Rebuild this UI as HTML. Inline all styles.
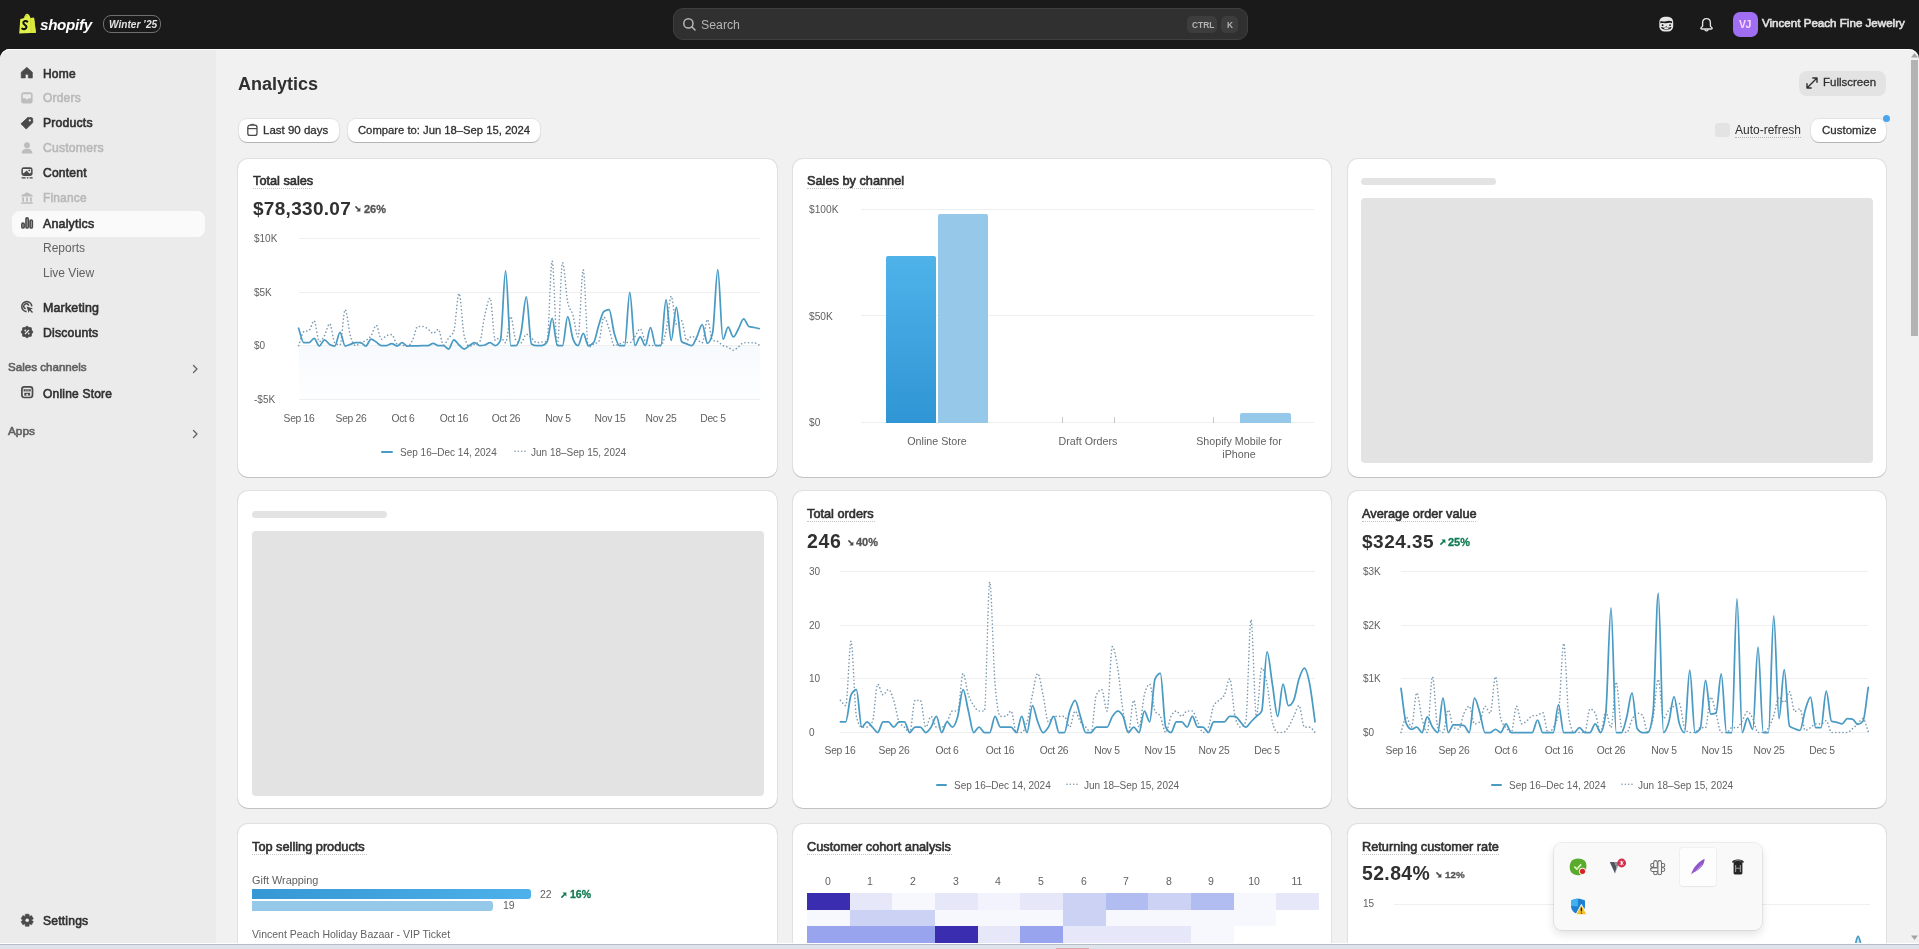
<!DOCTYPE html>
<html><head><meta charset="utf-8"><title>Analytics</title>
<style>
html,body{margin:0;padding:0;}
body{width:1919px;height:949px;overflow:hidden;position:relative;background:#1a1a1a;font-family:'Liberation Sans', sans-serif;-webkit-font-smoothing:antialiased;}
.t{position:absolute;white-space:nowrap;will-change:transform;}
.r{position:absolute;box-sizing:border-box;}
svg.r{overflow:visible;}
</style></head><body>
<svg class="r" style="left:14.00px;top:10.00px;" width="24" height="26" viewBox="0 0 24 26">
<path d="M6.3 9 C8 8.4 9.2 8.3 10 8 C10.6 5.4 11.6 3.8 13 3.8 C14.4 3.8 15.6 5 16.4 7.9 L20 7.7 L21.9 22.7 L5.2 23.5 Z" fill="#e3f04c"/>
<path d="M16.4 7.9 L20 7.7 L21.9 22.7 L17.2 23 Z" fill="#dbe83c"/>
<path d="M16.3 7.9 L17.1 23" stroke="#c9d62e" stroke-width="0.7"/>
<path d="M10.6 7.4 C11.2 5.6 12.4 5 13.6 5.8" fill="none" stroke="#a8b52a" stroke-width="0.9"/>
<path d="M13.3 11.6 C12.2 10.6 9.4 10.8 9.3 12.8 C9.2 15 12.6 14.6 12.5 17 C12.4 19 9.8 19.6 8.2 18.6" fill="none" stroke="#151515" stroke-width="2.1" stroke-linecap="round"/>
</svg>
<div class="t" style="left:40.20px;top:17px;font-size:15.2px;line-height:15.2px;color:#ffffff;font-weight:700;font-style:italic;letter-spacing:-0.3px;">shopify</div>
<div class="r" style="left:103.30px;top:15.00px;width:57.50px;height:18.00px;border:1px solid #6f6f6f;border-radius:8px;box-sizing:border-box;"></div>
<div class="t" style="left:108.60px;top:20px;font-size:10.1px;line-height:10.1px;color:#e3e3e3;font-weight:700;font-style:italic;">Winter ’25</div>
<div class="r" style="left:672.50px;top:8.40px;width:575.50px;height:31.30px;background:#303030;border:1px solid #3f3f3f;border-radius:10px;box-sizing:border-box;"></div>
<svg class="r" style="left:682.00px;top:17.00px;" width="15" height="15" viewBox="0 0 15 15"><circle cx="6.4" cy="6.4" r="4.6" fill="none" stroke="#b5b5b5" stroke-width="1.5"/><path d="M9.8 9.8 L13 13" stroke="#b5b5b5" stroke-width="1.6" stroke-linecap="round"/></svg>
<div class="t" style="left:700.60px;top:19px;font-size:12.3px;line-height:12.3px;color:#b5b5b5;">Search</div>
<div class="r" style="left:1187.00px;top:16.30px;width:29.60px;height:17.20px;background:#3d3d3d;border-radius:5px;"></div>
<div class="t" style="left:1191.50px;top:21px;font-size:8.4px;line-height:8.4px;color:#b5b5b5;font-weight:700;">CTRL</div>
<div class="r" style="left:1221.30px;top:16.30px;width:17.20px;height:17.20px;background:#3d3d3d;border-radius:5px;"></div>
<div class="t" style="left:1226.80px;top:21px;font-size:8.4px;line-height:8.4px;color:#b5b5b5;font-weight:700;">K</div>
<svg class="r" style="left:1658.00px;top:16.00px;" width="16" height="16" viewBox="0 0 16 16"><rect x="1.3" y="0.8" width="13.9" height="14.6" rx="5.2" fill="#e6e6e6"/>
<path d="M2.2 5.6 C4 4.4 5.6 6 8 5.2 C10 4.6 12 4.2 14.2 5.6 L14 7.2 C12 6.4 10 6.8 8 7.2 C6 7.6 4 6.6 2.4 7.4 Z" fill="#1a1a1a"/>
<circle cx="4.6" cy="9.2" r="0.9" fill="#1a1a1a"/><circle cx="12" cy="9.2" r="0.9" fill="#1a1a1a"/>
<path d="M7.4 10.8 L8.3 9.8 L9.2 10.8 Z" fill="#1a1a1a"/>
<path d="M3.4 11.6 C5 13.8 11.6 13.8 13.2 11.6 C11.4 12.4 5.2 12.4 3.4 11.6 Z" fill="#1a1a1a" stroke="#1a1a1a" stroke-width="0.9"/>
<ellipse cx="8.3" cy="12.5" rx="2.4" ry="0.8" fill="#e6e6e6"/></svg>
<svg class="r" style="left:1699.00px;top:17.00px;" width="15" height="15" viewBox="0 0 15 15"><path d="M3.6 9 L3.6 6 C3.6 3.3 5.2 1.6 7.5 1.6 C9.8 1.6 11.4 3.3 11.4 6 L11.4 9 C11.4 9.8 13.2 10.2 13.2 11.2 C13.2 11.8 12.8 12 12.2 12 L2.8 12 C2.2 12 1.8 11.8 1.8 11.2 C1.8 10.2 3.6 9.8 3.6 9 Z" fill="none" stroke="#e3e3e3" stroke-width="1.35" stroke-linejoin="round"/>
<path d="M5.9 12.3 C5.9 14.4 9.1 14.4 9.1 12.3" fill="none" stroke="#e3e3e3" stroke-width="1.3"/></svg>
<div class="r" style="left:1733.00px;top:11.50px;width:25.00px;height:25.50px;background:#a06ef2;border-radius:7px;"></div>
<div class="t" style="left:1739.30px;top:19px;font-size:10.5px;line-height:10.5px;color:#f9dbff;font-weight:700;letter-spacing:-0.6px;">VJ</div>
<div class="t" style="left:1762.00px;top:17px;font-size:11.6px;line-height:11.6px;color:#e3e3e3;-webkit-text-stroke:0.6px #e3e3e3;">Vincent Peach Fine Jewelry</div>
<div class="r" style="left:0.00px;top:48.60px;width:1919.00px;height:896.00px;background:#f1f1f1;border-radius:10px 10px 0 0;box-shadow:inset 0 1px 0 rgba(255,255,255,0.85);"></div>
<div class="r" style="left:0.00px;top:48.60px;width:216.00px;height:896.00px;background:#ebebeb;border-radius:10px 0 0 0;box-shadow:inset 0 1px 0 rgba(255,255,255,0.85);"></div>
<div class="r" style="left:11.60px;top:211.30px;width:193.00px;height:25.50px;background:#fafafa;border-radius:8px;"></div>
<svg class="r" style="left:21.30px;top:66.80px;" width="13" height="13" viewBox="0 0 13 13"><path d="M5.8 0.3 L11.4 5.2 L11.4 11 L7.3 11 L7.3 8 C7.3 7 4.3 7 4.3 8 L4.3 11 L0.2 11 L0.2 5.2 Z" fill="#4a4a4a" stroke="#4a4a4a" stroke-width="0.6" stroke-linejoin="round"/></svg>
<div class="t" style="left:43.00px;top:68px;font-size:12.0px;line-height:12.0px;color:#303030;-webkit-text-stroke:0.6px #303030;letter-spacing:0.2px;">Home</div>
<svg class="r" style="left:21.30px;top:91.60px;" width="13" height="13" viewBox="0 0 13 13"><rect x="0.2" y="0.3" width="11.4" height="11.2" rx="2.5" fill="#bdbdbd"/><path d="M1.8 2.2 L10 2.2 L10 6.2 L7.5 6.2 L6.5 7.6 L5.3 7.6 L4.3 6.2 L1.8 6.2 Z" fill="#ebebeb"/></svg>
<div class="t" style="left:43.00px;top:92px;font-size:12.0px;line-height:12.0px;color:#b9b9b9;-webkit-text-stroke:0.6px #b9b9b9;letter-spacing:0.2px;">Orders</div>
<svg class="r" style="left:21.30px;top:116.50px;" width="13" height="13" viewBox="0 0 13 13"><path d="M6.8 0.5 L10.8 0.7 C11.2 0.8 11.6 1.2 11.6 1.6 L11.8 5.6 L5.2 12 L0 6.8 Z" fill="#4a4a4a" stroke="#4a4a4a" stroke-width="0.8" stroke-linejoin="round"/><circle cx="8.8" cy="3.4" r="1.1" fill="#ebebeb"/></svg>
<div class="t" style="left:43.00px;top:117px;font-size:12.2px;line-height:12.2px;color:#303030;-webkit-text-stroke:0.6px #303030;letter-spacing:0.2px;">Products</div>
<svg class="r" style="left:21.30px;top:141.50px;" width="13" height="13" viewBox="0 0 13 13"><circle cx="6" cy="3.2" r="2.9" fill="#bdbdbd"/><path d="M0.6 11.5 C0.8 8 3 6.8 6 6.8 C9 6.8 11.2 8 11.4 11.5 Z" fill="#bdbdbd"/></svg>
<div class="t" style="left:43.00px;top:142px;font-size:12.2px;line-height:12.2px;color:#b9b9b9;-webkit-text-stroke:0.6px #b9b9b9;letter-spacing:0.2px;">Customers</div>
<svg class="r" style="left:21.30px;top:166.60px;" width="13" height="13" viewBox="0 0 13 13"><rect x="0.4" y="0.3" width="11.2" height="8.6" rx="2.4" fill="#4a4a4a"/><path d="M1.9 1.9 L10.1 1.9 L10.1 5.6 L8.4 6.6 L5.6 3.6 L3.6 5.4 L1.9 6.6 Z" fill="#ebebeb"/><circle cx="8.3" cy="3.4" r="0.9" fill="#4a4a4a"/><rect x="0.6" y="10.2" width="4" height="1.3" fill="#4a4a4a"/><rect x="5.8" y="10.2" width="1.6" height="1.3" fill="#4a4a4a"/><rect x="8.6" y="10.2" width="3" height="1.3" fill="#4a4a4a"/></svg>
<div class="t" style="left:43.00px;top:167px;font-size:12.1px;line-height:12.1px;color:#303030;-webkit-text-stroke:0.6px #303030;letter-spacing:0.2px;">Content</div>
<svg class="r" style="left:21.30px;top:191.60px;" width="13" height="13" viewBox="0 0 13 13"><path d="M6 0.2 L11.6 3.2 L11.6 4.6 L0.4 4.6 L0.4 3.2 Z" fill="#bdbdbd"/><rect x="1.2" y="5.4" width="1.8" height="4.2" fill="#bdbdbd"/><rect x="5.1" y="5.4" width="1.8" height="4.2" fill="#bdbdbd"/><rect x="9" y="5.4" width="1.8" height="4.2" fill="#bdbdbd"/><rect x="0.2" y="10.2" width="11.6" height="1.6" rx="0.5" fill="#bdbdbd"/></svg>
<div class="t" style="left:43.00px;top:193px;font-size:11.9px;line-height:11.9px;color:#b9b9b9;-webkit-text-stroke:0.6px #b9b9b9;letter-spacing:0.2px;">Finance</div>
<svg class="r" style="left:21.30px;top:216.80px;" width="13" height="13" viewBox="0 0 13 13"><rect x="0.9" y="6" width="2.2" height="5" rx="1.1" fill="none" stroke="#4a4a4a" stroke-width="1.7"/><rect x="5" y="0.9" width="2.2" height="10.1" rx="1.1" fill="none" stroke="#4a4a4a" stroke-width="1.7"/><rect x="9.1" y="3" width="2.2" height="8" rx="1.1" fill="none" stroke="#4a4a4a" stroke-width="1.7"/></svg>
<div class="t" style="left:43.00px;top:218px;font-size:12.4px;line-height:12.4px;color:#303030;-webkit-text-stroke:0.6px #303030;letter-spacing:0.2px;">Analytics</div>
<div class="t" style="left:43.00px;top:242px;font-size:12px;line-height:12px;color:#616161;">Reports</div>
<div class="t" style="left:43.00px;top:267px;font-size:12px;line-height:12px;color:#616161;">Live View</div>
<svg class="r" style="left:21.00px;top:300.80px;" width="13" height="13" viewBox="0 0 13 13"><path d="M10.8 5.4 A5 5 0 1 0 5.6 10.6" fill="none" stroke="#4a4a4a" stroke-width="1.6"/><path d="M7.8 4.6 A2.6 2.6 0 1 0 4.6 7.8" fill="none" stroke="#4a4a4a" stroke-width="1.5"/><path d="M5.6 5.6 L12 7.6 L9.6 8.6 L12 11 L11 12 L8.6 9.6 L7.6 12 Z" fill="#4a4a4a"/></svg>
<div class="t" style="left:43.00px;top:302px;font-size:12.4px;line-height:12.4px;color:#303030;-webkit-text-stroke:0.6px #303030;letter-spacing:0.2px;">Marketing</div>
<svg class="r" style="left:21.30px;top:325.60px;" width="13" height="13" viewBox="0 0 13 13"><polygon points="6.00,0.00 7.88,1.47 10.24,1.76 10.53,4.12 12.00,6.00 10.53,7.88 10.24,10.24 7.88,10.53 6.00,12.00 4.12,10.53 1.76,10.24 1.47,7.88 0.00,6.00 1.47,4.12 1.76,1.76 4.12,1.47" fill="#4a4a4a" stroke="#4a4a4a" stroke-width="0.8" stroke-linejoin="round"/><path d="M4 8 L8 4" stroke="#ebebeb" stroke-width="1.2"/><circle cx="4.3" cy="4.5" r="0.9" fill="#ebebeb"/><circle cx="7.7" cy="7.6" r="0.9" fill="#ebebeb"/></svg>
<div class="t" style="left:43.00px;top:327px;font-size:12.2px;line-height:12.2px;color:#303030;-webkit-text-stroke:0.6px #303030;letter-spacing:0.2px;">Discounts</div>
<div class="t" style="left:7.60px;top:361px;font-size:11.6px;line-height:11.6px;color:#616161;-webkit-text-stroke:0.6px #616161;">Sales channels</div>
<svg class="r" style="left:190.00px;top:363.00px;" width="10" height="12" viewBox="0 0 10 12"><path d="M3.5 2.5 L7 6 L3.5 9.5" fill="none" stroke="#616161" stroke-width="1.3" stroke-linecap="round" stroke-linejoin="round"/></svg>
<svg class="r" style="left:20.60px;top:386.20px;" width="13" height="13" viewBox="0 0 13 13"><rect x="0.9" y="0.9" width="10.6" height="10.6" rx="2.4" fill="none" stroke="#4a4a4a" stroke-width="1.7"/><path d="M2.6 3.2 L9.8 3.2 L9.8 5.4 L2.6 5.4 Z" fill="#4a4a4a"/><rect x="3.3" y="6.8" width="5.8" height="2.8" fill="#4a4a4a"/><path d="M4.6 3.4 L4.6 5.2 M6.2 3.4 L6.2 5.2 M7.8 3.4 L7.8 5.2" stroke="#ebebeb" stroke-width="0.5"/><rect x="5.3" y="7.9" width="1.8" height="1.7" fill="#ebebeb"/></svg>
<div class="t" style="left:43.00px;top:388px;font-size:12.0px;line-height:12.0px;color:#303030;-webkit-text-stroke:0.6px #303030;letter-spacing:0.2px;">Online Store</div>
<div class="t" style="left:7.60px;top:426px;font-size:11.8px;line-height:11.8px;color:#616161;-webkit-text-stroke:0.6px #616161;">Apps</div>
<svg class="r" style="left:190.00px;top:428.00px;" width="10" height="12" viewBox="0 0 10 12"><path d="M3.5 2.5 L7 6 L3.5 9.5" fill="none" stroke="#616161" stroke-width="1.3" stroke-linecap="round" stroke-linejoin="round"/></svg>
<svg class="r" style="left:21.00px;top:913.60px;" width="13" height="13" viewBox="0 0 13 13"><polygon points="8.06,12.22 4.34,12.22 4.14,9.97 3.96,9.87 1.92,10.82 0.06,7.60 1.90,6.30 1.90,6.10 0.06,4.80 1.92,1.58 3.96,2.53 4.14,2.43 4.34,0.18 8.06,0.18 8.26,2.43 8.44,2.53 10.48,1.58 12.34,4.80 10.50,6.10 10.50,6.30 12.34,7.60 10.48,10.82 8.44,9.87 8.26,9.97" fill="#4a4a4a" stroke="#4a4a4a" stroke-width="0.6" stroke-linejoin="round"/><circle cx="6.2" cy="6.2" r="1.8" fill="#ebebeb"/></svg>
<div class="t" style="left:43.00px;top:915px;font-size:12.1px;line-height:12.1px;color:#303030;-webkit-text-stroke:0.6px #303030;letter-spacing:0.2px;">Settings</div>
<div class="t" style="left:237.80px;top:75px;font-size:18px;line-height:18px;color:#303030;font-weight:700;">Analytics</div>
<div class="r" style="left:1798.60px;top:71.30px;width:87.70px;height:24.50px;background:#e3e3e3;border-radius:8px;"></div>
<svg class="r" style="left:1805.00px;top:76.00px;" width="14" height="14" viewBox="0 0 14 14"><path d="M2 12 L12 2 M7.8 2 L12 2 L12 6.2 M2 7.8 L2 12 L6.2 12" fill="none" stroke="#303030" stroke-width="1.4" stroke-linecap="round" stroke-linejoin="round"/></svg>
<div class="t" style="left:1823.00px;top:77px;font-size:11.5px;line-height:11.5px;color:#303030;-webkit-text-stroke:0.3px #303030;">Fullscreen</div>
<div class="r" style="left:239.00px;top:119.20px;width:99.90px;height:23.30px;background:#fff;border-radius:8px;box-shadow:0 0 0 1px rgba(0,0,0,0.06), 0 1px 0 0 rgba(0,0,0,0.2);"></div>
<svg class="r" style="left:246.00px;top:122.00px;" width="14" height="17" viewBox="0 0 14 17"><rect x="1.8" y="3.2" width="9.2" height="10.2" rx="2.2" fill="none" stroke="#4a4a4a" stroke-width="1.3"/><path d="M1.8 6.6 L11 6.6" stroke="#4a4a4a" stroke-width="1.2"/><path d="M4.4 2.4 L8.4 2.4" stroke="#4a4a4a" stroke-width="1"/></svg>
<div class="t" style="left:263.00px;top:125px;font-size:11.5px;line-height:11.5px;color:#303030;-webkit-text-stroke:0.3px #303030;">Last 90 days</div>
<div class="r" style="left:347.80px;top:119.20px;width:192.60px;height:23.30px;background:#fff;border-radius:8px;box-shadow:0 0 0 1px rgba(0,0,0,0.06), 0 1px 0 0 rgba(0,0,0,0.2);"></div>
<div class="t" style="left:358.10px;top:125px;font-size:11.25px;line-height:11.25px;color:#303030;-webkit-text-stroke:0.3px #303030;">Compare to: Jun 18–Sep 15, 2024</div>
<div class="r" style="left:1715.10px;top:122.70px;width:14.70px;height:14.30px;background:#e3e3e3;border-radius:3.5px;"></div>
<div class="t" style="left:1734.50px;top:124px;font-size:12px;line-height:12px;color:#303030;border-bottom:1px dotted #b5b5b5;line-height:13px;">Auto-refresh</div>
<div class="r" style="left:1811.20px;top:119.20px;width:75.10px;height:23.30px;background:#fff;border-radius:8px;box-shadow:0 0 0 1px rgba(0,0,0,0.06), 0 1px 0 0 rgba(0,0,0,0.2);"></div>
<div class="t" style="left:1821.80px;top:125px;font-size:11.5px;line-height:11.5px;color:#303030;-webkit-text-stroke:0.3px #303030;">Customize</div>
<div class="r" style="left:1883.40px;top:115.30px;width:7.00px;height:7.00px;background:#4ba5ee;border-radius:50%;"></div>
<svg class="r" style="left:1910.00px;top:51.00px;" width="9" height="8" viewBox="0 0 9 8"><path d="M1 6.5 L4.5 2 L8 6.5 Z" fill="#a3a3a3"/></svg>
<div class="r" style="left:1910.90px;top:60.30px;width:6.90px;height:275.70px;background:#b3b3b3;"></div>
<svg class="r" style="left:1910.00px;top:934.00px;" width="9" height="8" viewBox="0 0 9 8"><path d="M1 1.5 L4.5 6 L8 1.5 Z" fill="#a3a3a3"/></svg>
<div class="r" style="left:238.40px;top:158.80px;width:538.60px;height:317.80px;background:#fff;border-radius:10px;box-shadow:0 0 0 1px rgba(0,0,0,0.07), 0 1px 0 0 rgba(0,0,0,0.13);"></div>
<div class="r" style="left:792.90px;top:158.80px;width:538.60px;height:317.80px;background:#fff;border-radius:10px;box-shadow:0 0 0 1px rgba(0,0,0,0.07), 0 1px 0 0 rgba(0,0,0,0.13);"></div>
<div class="r" style="left:1347.60px;top:158.80px;width:538.60px;height:317.80px;background:#fff;border-radius:10px;box-shadow:0 0 0 1px rgba(0,0,0,0.07), 0 1px 0 0 rgba(0,0,0,0.13);"></div>
<div class="r" style="left:238.40px;top:490.70px;width:538.60px;height:317.80px;background:#fff;border-radius:10px;box-shadow:0 0 0 1px rgba(0,0,0,0.07), 0 1px 0 0 rgba(0,0,0,0.13);"></div>
<div class="r" style="left:792.90px;top:490.70px;width:538.60px;height:317.80px;background:#fff;border-radius:10px;box-shadow:0 0 0 1px rgba(0,0,0,0.07), 0 1px 0 0 rgba(0,0,0,0.13);"></div>
<div class="r" style="left:1347.60px;top:490.70px;width:538.60px;height:317.80px;background:#fff;border-radius:10px;box-shadow:0 0 0 1px rgba(0,0,0,0.07), 0 1px 0 0 rgba(0,0,0,0.13);"></div>
<div class="r" style="left:238.40px;top:824.30px;width:538.60px;height:200.00px;background:#fff;border-radius:10px;box-shadow:0 0 0 1px rgba(0,0,0,0.07), 0 1px 0 0 rgba(0,0,0,0.13);"></div>
<div class="r" style="left:792.90px;top:824.30px;width:538.60px;height:200.00px;background:#fff;border-radius:10px;box-shadow:0 0 0 1px rgba(0,0,0,0.07), 0 1px 0 0 rgba(0,0,0,0.13);"></div>
<div class="r" style="left:1347.60px;top:824.30px;width:538.60px;height:200.00px;background:#fff;border-radius:10px;box-shadow:0 0 0 1px rgba(0,0,0,0.07), 0 1px 0 0 rgba(0,0,0,0.13);"></div>
<div class="r" style="left:1360.80px;top:178.00px;width:135.20px;height:6.80px;background:#e3e3e3;border-radius:3.5px;"></div>
<div class="r" style="left:1360.80px;top:197.70px;width:512.20px;height:265.30px;background:#e3e3e3;border-radius:4px;"></div>
<div class="r" style="left:252.10px;top:511.00px;width:135.20px;height:6.80px;background:#e3e3e3;border-radius:3.5px;"></div>
<div class="r" style="left:252.10px;top:531.20px;width:512.20px;height:265.30px;background:#e3e3e3;border-radius:4px;"></div>
<div class="t" style="left:252.60px;top:175px;font-size:12.75px;line-height:12.75px;color:#303030;-webkit-text-stroke:0.6px #303030;">Total sales</div>
<div class="r" style="left:252.60px;top:188.10px;width:59.80px;height:1.00px;border-top:1px dotted #c4c4c4;"></div>
<div class="t" style="left:252.60px;top:199px;font-size:19px;line-height:19px;color:#303030;font-weight:700;letter-spacing:0.3px;">$78,330.07</div>
<svg class="r" style="left:355.20px;top:206.40px;" width="6" height="6" viewBox="0 0 6 6"><path d="M0.9 0.9 L3.8 3.8" stroke="#4a4a4a" stroke-width="1.6" stroke-linecap="round"/><path d="M1.4 5.4 L5.4 5.4 L5.4 1.4 Z" fill="#4a4a4a"/></svg>
<div class="t" style="left:364.40px;top:204px;font-size:11px;line-height:11px;color:#555555;font-weight:700;-webkit-text-stroke:0.3px #555555;">26%</div>
<div class="r" style="left:298.60px;top:345.60px;width:461.00px;height:53.60px;background:linear-gradient(#f7fafd,#fdfeff);"></div>
<div class="r" style="left:298.60px;top:237.60px;width:461.00px;height:1.00px;background:#efefef;"></div>
<div class="t" style="left:254.00px;top:234px;font-size:10px;line-height:10px;color:#616161;">$10K</div>
<div class="r" style="left:298.60px;top:291.50px;width:461.00px;height:1.00px;background:#efefef;"></div>
<div class="t" style="left:254.00px;top:288px;font-size:10px;line-height:10px;color:#616161;">$5K</div>
<div class="r" style="left:298.60px;top:345.10px;width:461.00px;height:1.00px;background:#efefef;"></div>
<div class="t" style="left:254.00px;top:341px;font-size:10px;line-height:10px;color:#616161;">$0</div>
<div class="r" style="left:298.60px;top:398.70px;width:461.00px;height:1.00px;background:#efefef;"></div>
<div class="t" style="left:254.00px;top:395px;font-size:10px;line-height:10px;color:#616161;">-$5K</div>
<div class="t" style="left:99.00px;width:400px;text-align:center;top:414px;font-size:10.3px;line-height:10.3px;color:#616161;letter-spacing:-0.3px;">Sep 16</div>
<div class="t" style="left:150.75px;width:400px;text-align:center;top:414px;font-size:10.3px;line-height:10.3px;color:#616161;letter-spacing:-0.3px;">Sep 26</div>
<div class="t" style="left:202.50px;width:400px;text-align:center;top:414px;font-size:10.3px;line-height:10.3px;color:#616161;letter-spacing:-0.3px;">Oct 6</div>
<div class="t" style="left:254.25px;width:400px;text-align:center;top:414px;font-size:10.3px;line-height:10.3px;color:#616161;letter-spacing:-0.3px;">Oct 16</div>
<div class="t" style="left:306.00px;width:400px;text-align:center;top:414px;font-size:10.3px;line-height:10.3px;color:#616161;letter-spacing:-0.3px;">Oct 26</div>
<div class="t" style="left:357.75px;width:400px;text-align:center;top:414px;font-size:10.3px;line-height:10.3px;color:#616161;letter-spacing:-0.3px;">Nov 5</div>
<div class="t" style="left:409.50px;width:400px;text-align:center;top:414px;font-size:10.3px;line-height:10.3px;color:#616161;letter-spacing:-0.3px;">Nov 15</div>
<div class="t" style="left:461.25px;width:400px;text-align:center;top:414px;font-size:10.3px;line-height:10.3px;color:#616161;letter-spacing:-0.3px;">Nov 25</div>
<div class="t" style="left:513.00px;width:400px;text-align:center;top:414px;font-size:10.3px;line-height:10.3px;color:#616161;letter-spacing:-0.3px;">Dec 5</div>
<svg class="r" style="left:290.00px;top:240.00px;" width="480" height="130" viewBox="0 0 480 130"><path d="M8.60,105.60 C10.33,100.97 12.05,92.50 13.78,91.70 C15.50,90.90 17.23,91.30 18.95,90.50 C20.68,89.70 22.40,80.70 24.12,80.70 C25.85,80.70 27.58,101.50 29.30,101.50 C31.03,101.50 32.75,98.68 34.48,95.70 C36.20,92.72 37.93,83.60 39.65,83.60 C41.38,83.60 43.10,101.17 44.83,102.70 C46.55,104.23 48.28,105.00 50.00,105.00 C51.73,105.00 53.45,69.70 55.18,69.70 C56.90,69.70 58.63,89.72 60.35,95.70 C62.08,101.68 63.80,105.60 65.53,105.60 C67.25,105.60 68.98,103.84 70.70,102.97 C72.43,102.11 74.15,101.61 75.88,100.40 C77.60,99.19 79.33,98.22 81.05,95.70 C82.78,93.18 84.50,85.30 86.23,85.30 C87.95,85.30 89.68,99.20 91.40,99.20 C93.13,99.20 94.85,96.43 96.58,95.70 C98.30,94.97 100.03,94.60 101.75,94.60 C103.48,94.60 105.20,103.09 106.93,103.90 C108.65,104.71 110.38,104.74 112.10,105.12 C113.83,105.50 115.55,106.20 117.28,106.20 C119.00,106.20 120.73,103.68 122.45,100.40 C124.18,97.12 125.90,86.50 127.62,86.50 C129.35,86.50 131.08,86.50 132.80,86.50 C134.53,86.50 136.25,87.85 137.98,89.00 C139.70,90.15 141.42,93.40 143.15,93.40 C144.88,93.40 146.60,89.40 148.33,89.40 C150.05,89.40 151.78,105.00 153.50,105.00 C155.22,105.00 156.95,100.32 158.68,98.00 C160.40,95.68 162.13,95.70 163.85,91.10 C165.58,86.50 167.30,53.50 169.02,53.50 C170.75,53.50 172.48,88.70 174.20,95.70 C175.93,102.70 177.65,106.20 179.38,106.20 C181.10,106.20 182.83,104.97 184.55,104.18 C186.28,103.40 188.00,103.29 189.73,101.50 C191.45,99.71 193.17,82.13 194.90,74.90 C196.62,67.67 198.35,58.10 200.08,58.10 C201.80,58.10 203.53,100.40 205.25,100.40 C206.97,100.40 208.70,96.90 210.43,96.90 C212.15,96.90 213.88,102.70 215.60,102.70 C217.33,102.70 219.05,76.60 220.77,76.60 C222.50,76.60 224.23,98.87 225.95,100.40 C227.68,101.93 229.40,102.70 231.12,102.70 C232.85,102.70 234.57,94.23 236.30,94.23 C238.02,94.23 239.75,96.59 241.48,98.00 C243.20,99.41 244.92,102.70 246.65,102.70 C248.38,102.70 250.10,102.26 251.83,102.06 C253.55,101.86 255.28,101.87 257.00,101.50 C258.72,101.13 260.45,21.00 262.17,21.00 C263.90,21.00 265.62,106.20 267.35,106.20 C269.08,106.20 270.80,22.70 272.53,22.70 C274.25,22.70 275.98,53.57 277.70,62.10 C279.43,70.63 281.15,69.10 282.88,74.90 C284.60,80.70 286.32,96.90 288.05,96.90 C289.77,96.90 291.50,29.70 293.23,29.70 C294.95,29.70 296.68,107.30 298.40,107.30 C300.13,107.30 301.85,105.06 303.58,104.10 C305.30,103.13 307.03,103.23 308.75,101.50 C310.47,99.77 312.20,77.20 313.92,77.20 C315.65,77.20 317.38,84.07 319.10,88.80 C320.83,93.53 322.55,105.60 324.28,105.60 C326.00,105.60 327.73,104.47 329.45,103.89 C331.18,103.31 332.90,102.10 334.62,102.10 C336.35,102.10 338.07,102.70 339.80,102.70 C341.52,102.70 343.25,98.78 344.98,96.46 C346.70,94.14 348.43,88.80 350.15,88.80 C351.88,88.80 353.60,98.77 355.33,101.50 C357.05,104.23 358.78,105.60 360.50,105.60 C362.22,105.60 363.95,105.53 365.67,105.43 C367.40,105.33 369.12,105.28 370.85,105.00 C372.58,104.72 374.30,99.22 376.03,91.10 C377.75,82.98 379.48,56.30 381.20,56.30 C382.93,56.30 384.65,84.20 386.38,84.20 C388.10,84.20 389.82,80.70 391.55,80.70 C393.27,80.70 395.00,100.40 396.73,100.40 C398.45,100.40 400.18,96.30 401.90,96.30 C403.63,96.30 405.35,98.53 407.08,99.60 C408.80,100.67 410.53,102.70 412.25,102.70 C413.97,102.70 415.70,79.50 417.42,79.50 C419.15,79.50 420.88,99.67 422.60,100.40 C424.33,101.13 426.05,100.77 427.78,101.50 C429.50,102.23 431.23,104.65 432.95,105.60 C434.68,106.55 436.40,106.44 438.12,107.20 C439.85,107.97 441.57,110.20 443.30,110.20 C445.02,110.20 446.75,108.17 448.48,106.92 C450.20,105.67 451.93,102.70 453.65,102.70 C455.38,102.70 457.10,102.70 458.83,102.70 C460.55,102.70 462.28,102.70 464.00,102.70 C465.72,102.70 467.45,104.23 469.17,105.00" fill="none" stroke="#7d9bb0" stroke-width="1.6" stroke-dasharray="0.1 3.5" stroke-linecap="round"/><path d="M8.60,88.20 C10.33,93.03 12.05,102.70 13.78,102.70 C15.50,102.70 17.23,102.70 18.95,102.70 C20.68,102.70 22.40,98.30 24.12,98.30 C25.85,98.30 27.58,106.00 29.30,106.00 C31.03,106.00 32.75,99.80 34.48,99.80 C36.20,99.80 37.93,103.37 39.65,104.40 C41.38,105.43 43.10,106.00 44.83,106.00 C46.55,106.00 48.28,92.30 50.00,92.30 C51.73,92.30 53.45,106.00 55.18,106.00 C56.90,106.00 58.63,104.86 60.35,104.31 C62.08,103.76 63.80,102.70 65.53,102.70 C67.25,102.70 68.98,102.70 70.70,102.70 C72.43,102.70 74.15,106.00 75.88,106.00 C77.60,106.00 79.33,99.00 81.05,99.00 C82.78,99.00 84.50,100.90 86.23,102.00 C87.95,103.10 89.68,105.60 91.40,105.60 C93.13,105.60 94.85,105.60 96.58,105.60 C98.30,105.60 100.03,103.60 101.75,103.60 C103.48,103.60 105.20,106.00 106.93,106.00 C108.65,106.00 110.38,102.70 112.10,102.70 C113.83,102.70 115.55,106.00 117.28,106.00 C119.00,106.00 120.73,105.93 122.45,105.90 C124.18,105.87 125.90,105.83 127.62,105.80 C129.35,105.77 131.08,105.74 132.80,105.71 C134.53,105.67 136.25,105.67 137.98,105.60 C139.70,105.53 141.42,103.30 143.15,103.30 C144.88,103.30 146.60,105.60 148.33,105.60 C150.05,105.60 151.78,105.60 153.50,105.60 C155.22,105.60 156.95,109.00 158.68,109.00 C160.40,109.00 162.13,99.80 163.85,99.80 C165.58,99.80 167.30,103.47 169.02,105.00 C170.75,106.53 172.48,109.00 174.20,109.00 C175.93,109.00 177.65,106.65 179.38,105.60 C181.10,104.55 182.83,102.70 184.55,102.70 C186.28,102.70 188.00,105.60 189.73,105.60 C191.45,105.60 193.17,105.40 194.90,105.00 C196.62,104.60 198.35,102.50 200.08,102.50 C201.80,102.50 203.53,105.60 205.25,105.60 C206.97,105.60 208.70,103.87 210.43,100.40 C212.15,96.93 213.88,30.90 215.60,30.90 C217.33,30.90 219.05,105.60 220.77,105.60 C222.50,105.60 224.23,105.60 225.95,105.60 C227.68,105.60 229.40,100.42 231.12,92.30 C232.85,84.18 234.57,56.90 236.30,56.90 C238.02,56.90 239.75,102.77 241.48,103.90 C243.20,105.03 244.92,105.60 246.65,105.60 C248.38,105.60 250.10,105.60 251.83,105.60 C253.55,105.60 255.28,104.43 257.00,102.10 C258.72,99.77 260.45,78.40 262.17,78.40 C263.90,78.40 265.62,105.60 267.35,105.60 C269.08,105.60 270.80,105.60 272.53,105.60 C274.25,105.60 275.98,76.60 277.70,76.60 C279.43,76.60 281.15,93.93 282.88,98.60 C284.60,103.27 286.32,105.60 288.05,105.60 C289.77,105.60 291.50,93.40 293.23,93.40 C294.95,93.40 296.68,105.60 298.40,105.60 C300.13,105.60 301.85,104.63 303.58,102.70 C305.30,100.77 307.03,90.52 308.75,85.30 C310.47,80.08 312.20,72.53 313.92,71.40 C315.65,70.27 317.38,69.70 319.10,69.70 C320.83,69.70 322.55,87.42 324.28,93.40 C326.00,99.38 327.73,105.60 329.45,105.60 C331.18,105.60 332.90,105.60 334.62,105.60 C336.35,105.60 338.07,52.30 339.80,52.30 C341.52,52.30 343.25,105.60 344.98,105.60 C346.70,105.60 348.43,96.90 350.15,96.90 C351.88,96.90 353.60,105.60 355.33,105.60 C357.05,105.60 358.78,87.60 360.50,87.60 C362.22,87.60 363.95,105.60 365.67,105.60 C367.40,105.60 369.12,105.60 370.85,105.60 C372.58,105.60 374.30,59.80 376.03,59.80 C377.75,59.80 379.48,100.40 381.20,100.40 C382.93,100.40 384.65,67.40 386.38,67.40 C388.10,67.40 389.82,99.90 391.55,101.50 C393.27,103.10 395.00,103.22 396.73,103.90 C398.45,104.58 400.18,105.60 401.90,105.60 C403.63,105.60 405.35,99.78 407.08,96.30 C408.80,92.82 410.53,84.70 412.25,84.70 C413.97,84.70 415.70,103.30 417.42,103.30 C419.15,103.30 420.88,99.83 422.60,92.90 C424.33,85.97 426.05,29.70 427.78,29.70 C429.50,29.70 431.23,99.20 432.95,99.20 C434.68,99.20 436.40,87.10 438.12,87.10 C439.85,87.10 441.57,96.90 443.30,96.90 C445.02,96.90 446.75,91.80 448.48,88.80 C450.20,85.80 451.93,78.90 453.65,78.90 C455.38,78.90 457.10,85.84 458.83,86.50 C460.55,87.16 462.28,87.14 464.00,87.49 C465.72,87.84 467.45,88.23 469.17,88.60" fill="none" stroke="#4a9bc4" stroke-width="1.75" stroke-linejoin="round" stroke-linecap="round"/></svg>
<div class="r" style="left:381.40px;top:451.40px;width:11.40px;height:2.00px;background:#4a9bc4;border-radius:1px;"></div>
<div class="t" style="left:399.80px;top:448px;font-size:10px;line-height:10px;color:#616161;">Sep 16–Dec 14, 2024</div>
<svg class="r" style="left:513.60px;top:450.20px;" width="13" height="3" viewBox="0 0 13 3"><path d="M1 1.2 L12 1.2" stroke="#7d9bb0" stroke-width="1.5" stroke-dasharray="0.1 3.2" stroke-linecap="round"/></svg>
<div class="t" style="left:531.10px;top:448px;font-size:10px;line-height:10px;color:#616161;">Jun 18–Sep 15, 2024</div>
<div class="t" style="left:806.70px;top:175px;font-size:12.75px;line-height:12.75px;color:#303030;-webkit-text-stroke:0.6px #303030;">Sales by channel</div>
<div class="r" style="left:806.70px;top:188.00px;width:96.30px;height:1.00px;border-top:1px dotted #c4c4c4;"></div>
<div class="r" style="left:861.30px;top:209.00px;width:453.00px;height:1.00px;background:#efefef;"></div>
<div class="t" style="left:809.00px;top:205px;font-size:10.2px;line-height:10.2px;color:#616161;">$100K</div>
<div class="r" style="left:861.30px;top:315.40px;width:453.00px;height:1.00px;background:#efefef;"></div>
<div class="t" style="left:809.00px;top:312px;font-size:10.2px;line-height:10.2px;color:#616161;">$50K</div>
<div class="r" style="left:861.30px;top:422.10px;width:453.00px;height:1.00px;background:#efefef;"></div>
<div class="t" style="left:809.00px;top:418px;font-size:10.2px;line-height:10.2px;color:#616161;">$0</div>
<div class="r" style="left:885.60px;top:256.00px;width:50.40px;height:166.60px;background:linear-gradient(#4fb3ea,#2f95d4);border-radius:2px 2px 0 0;"></div>
<div class="r" style="left:937.80px;top:214.30px;width:50.40px;height:208.30px;background:#96c9e9;border-radius:2px 2px 0 0;"></div>
<div class="r" style="left:1240.30px;top:412.50px;width:50.40px;height:10.10px;background:#96c9e9;border-radius:2px 2px 0 0;"></div>
<div class="r" style="left:1061.80px;top:416.80px;width:1.00px;height:5.80px;background:#c9c9c9;"></div>
<div class="r" style="left:1113.90px;top:416.80px;width:1.00px;height:5.80px;background:#c9c9c9;"></div>
<div class="r" style="left:1213.00px;top:416.80px;width:1.00px;height:5.80px;background:#c9c9c9;"></div>
<div class="t" style="left:736.70px;width:400px;text-align:center;top:436px;font-size:10.7px;line-height:10.7px;color:#616161;">Online Store</div>
<div class="t" style="left:888.00px;width:400px;text-align:center;top:436px;font-size:10.7px;line-height:10.7px;color:#616161;">Draft Orders</div>
<div class="t" style="left:1039.20px;width:400px;text-align:center;top:436px;font-size:10.7px;line-height:10.7px;color:#616161;">Shopify Mobile for</div>
<div class="t" style="left:1039.20px;width:400px;text-align:center;top:449px;font-size:10.7px;line-height:10.7px;color:#616161;">iPhone</div>
<div class="t" style="left:806.90px;top:508px;font-size:12.75px;line-height:12.75px;color:#303030;-webkit-text-stroke:0.6px #303030;">Total orders</div>
<div class="r" style="left:806.90px;top:521.00px;width:68.40px;height:1.00px;border-top:1px dotted #c4c4c4;"></div>
<div class="t" style="left:807.20px;top:532px;font-size:19.5px;line-height:19.5px;color:#303030;font-weight:700;letter-spacing:0.7px;">246</div>
<svg class="r" style="left:847.60px;top:539.60px;" width="6" height="6" viewBox="0 0 6 6"><path d="M0.9 0.9 L3.8 3.8" stroke="#4a4a4a" stroke-width="1.6" stroke-linecap="round"/><path d="M1.4 5.4 L5.4 5.4 L5.4 1.4 Z" fill="#4a4a4a"/></svg>
<div class="t" style="left:856.00px;top:537px;font-size:11px;line-height:11px;color:#555555;font-weight:700;-webkit-text-stroke:0.3px #555555;">40%</div>
<div class="r" style="left:840.40px;top:570.90px;width:474.60px;height:1.00px;background:#efefef;"></div>
<div class="t" style="left:809.00px;top:567px;font-size:10px;line-height:10px;color:#616161;">30</div>
<div class="r" style="left:840.40px;top:624.70px;width:474.60px;height:1.00px;background:#efefef;"></div>
<div class="t" style="left:809.00px;top:621px;font-size:10px;line-height:10px;color:#616161;">20</div>
<div class="r" style="left:840.40px;top:678.30px;width:474.60px;height:1.00px;background:#efefef;"></div>
<div class="t" style="left:809.00px;top:674px;font-size:10px;line-height:10px;color:#616161;">10</div>
<div class="r" style="left:840.40px;top:732.00px;width:474.60px;height:1.00px;background:#efefef;"></div>
<div class="t" style="left:809.00px;top:728px;font-size:10px;line-height:10px;color:#616161;">0</div>
<div class="t" style="left:640.40px;width:400px;text-align:center;top:746px;font-size:10.3px;line-height:10.3px;color:#616161;letter-spacing:-0.3px;">Sep 16</div>
<div class="t" style="left:693.73px;width:400px;text-align:center;top:746px;font-size:10.3px;line-height:10.3px;color:#616161;letter-spacing:-0.3px;">Sep 26</div>
<div class="t" style="left:747.06px;width:400px;text-align:center;top:746px;font-size:10.3px;line-height:10.3px;color:#616161;letter-spacing:-0.3px;">Oct 6</div>
<div class="t" style="left:800.39px;width:400px;text-align:center;top:746px;font-size:10.3px;line-height:10.3px;color:#616161;letter-spacing:-0.3px;">Oct 16</div>
<div class="t" style="left:853.72px;width:400px;text-align:center;top:746px;font-size:10.3px;line-height:10.3px;color:#616161;letter-spacing:-0.3px;">Oct 26</div>
<div class="t" style="left:907.05px;width:400px;text-align:center;top:746px;font-size:10.3px;line-height:10.3px;color:#616161;letter-spacing:-0.3px;">Nov 5</div>
<div class="t" style="left:960.38px;width:400px;text-align:center;top:746px;font-size:10.3px;line-height:10.3px;color:#616161;letter-spacing:-0.3px;">Nov 15</div>
<div class="t" style="left:1013.71px;width:400px;text-align:center;top:746px;font-size:10.3px;line-height:10.3px;color:#616161;letter-spacing:-0.3px;">Nov 25</div>
<div class="t" style="left:1067.04px;width:400px;text-align:center;top:746px;font-size:10.3px;line-height:10.3px;color:#616161;letter-spacing:-0.3px;">Dec 5</div>
<svg class="r" style="left:830.00px;top:560.00px;" width="500" height="185" viewBox="0 0 500 185"><path d="M10.40,140.28 C12.18,142.07 13.96,145.65 15.73,145.65 C17.51,145.65 19.29,81.21 21.07,81.21 C22.84,81.21 24.62,149.23 26.40,156.39 C28.18,163.55 29.95,167.13 31.73,167.13 C33.51,167.13 35.29,167.13 37.06,167.13 C38.84,167.13 40.62,165.34 42.40,161.76 C44.18,158.18 45.95,124.17 47.73,124.17 C49.51,124.17 51.29,134.91 53.06,134.91 C54.84,134.91 56.62,129.54 58.40,129.54 C60.17,129.54 61.95,134.91 63.73,140.28 C65.51,145.65 67.29,158.18 69.06,161.76 C70.84,165.34 72.62,165.34 74.40,167.13 C76.17,168.92 77.95,172.50 79.73,172.50 C81.51,172.50 83.28,140.28 85.06,140.28 C86.84,140.28 88.62,140.28 90.39,140.28 C92.17,140.28 93.95,167.13 95.73,167.13 C97.51,167.13 99.28,156.39 101.06,156.39 C102.84,156.39 104.62,167.13 106.39,167.13 C108.17,167.13 109.95,167.13 111.73,167.13 C113.50,167.13 115.28,164.44 117.06,161.76 C118.84,159.07 120.62,151.02 122.39,151.02 C124.17,151.02 125.95,151.02 127.73,151.02 C129.50,151.02 131.28,113.43 133.06,113.43 C134.84,113.43 136.61,129.54 138.39,134.91 C140.17,140.28 141.95,142.96 143.73,145.65 C145.50,148.33 147.28,151.02 149.06,151.02 C150.84,151.02 152.61,151.02 154.39,151.02 C156.17,151.02 157.95,22.14 159.72,22.14 C161.50,22.14 163.28,102.69 165.06,124.17 C166.83,145.65 168.61,156.39 170.39,156.39 C172.17,156.39 173.95,156.39 175.72,156.39 C177.50,156.39 179.28,151.02 181.06,151.02 C182.83,151.02 184.61,172.50 186.39,172.50 C188.17,172.50 189.94,172.50 191.72,172.50 C193.50,172.50 195.28,168.03 197.06,161.76 C198.83,155.50 200.61,142.96 202.39,134.91 C204.17,126.85 205.94,113.43 207.72,113.43 C209.50,113.43 211.28,126.85 213.05,134.91 C214.83,142.96 216.61,161.76 218.39,161.76 C220.16,161.76 221.94,156.39 223.72,156.39 C225.50,156.39 227.28,156.39 229.05,156.39 C230.83,156.39 232.61,156.39 234.39,156.39 C236.16,156.39 237.94,167.13 239.72,167.13 C241.50,167.13 243.27,151.02 245.05,151.02 C246.83,151.02 248.61,159.07 250.38,161.76 C252.16,164.44 253.94,165.34 255.72,167.13 C257.50,168.92 259.27,172.50 261.05,172.50 C262.83,172.50 264.61,138.49 266.38,134.91 C268.16,131.33 269.94,129.54 271.72,129.54 C273.49,129.54 275.27,151.02 277.05,151.02 C278.83,151.02 280.61,86.58 282.38,86.58 C284.16,86.58 285.94,97.32 287.72,108.06 C289.49,118.80 291.27,140.28 293.05,151.02 C294.83,161.76 296.60,172.50 298.38,172.50 C300.16,172.50 301.94,140.28 303.71,140.28 C305.49,140.28 307.27,167.13 309.05,167.13 C310.83,167.13 312.60,142.07 314.38,134.91 C316.16,127.75 317.94,124.17 319.71,124.17 C321.49,124.17 323.27,147.44 325.05,151.02 C326.82,154.60 328.60,152.81 330.38,156.39 C332.16,159.97 333.94,172.50 335.71,172.50 C337.49,172.50 339.27,159.97 341.05,156.39 C342.82,152.81 344.60,151.02 346.38,151.02 C348.16,151.02 349.93,156.39 351.71,156.39 C353.49,156.39 355.27,151.02 357.05,151.02 C358.82,151.02 360.60,151.02 362.38,151.02 C364.16,151.02 365.93,158.18 367.71,161.76 C369.49,165.34 371.27,172.50 373.04,172.50 C374.82,172.50 376.60,170.71 378.38,167.13 C380.15,163.55 381.93,149.23 383.71,145.65 C385.49,142.07 387.27,142.07 389.04,140.28 C390.82,138.49 392.60,138.49 394.38,134.91 C396.15,131.33 397.93,118.80 399.71,118.80 C401.49,118.80 403.26,149.23 405.04,156.39 C406.82,163.55 408.60,167.13 410.38,167.13 C412.15,167.13 413.93,165.34 415.71,161.76 C417.49,158.18 419.26,59.73 421.04,59.73 C422.82,59.73 424.60,156.39 426.37,156.39 C428.15,156.39 429.93,108.06 431.71,108.06 C433.48,108.06 435.26,115.22 437.04,124.17 C438.82,133.12 440.60,154.60 442.37,161.76 C444.15,168.92 445.93,172.50 447.71,172.50 C449.48,172.50 451.26,172.50 453.04,172.50 C454.82,172.50 456.59,169.82 458.37,167.13 C460.15,164.45 461.93,159.97 463.70,156.39 C465.48,152.81 467.26,145.65 469.04,145.65 C470.82,145.65 472.59,167.13 474.37,167.13 C476.15,167.13 477.93,167.13 479.70,167.13 C481.48,167.13 483.26,170.71 485.04,172.50" fill="none" stroke="#7d9bb0" stroke-width="1.6" stroke-dasharray="0.1 3.5" stroke-linecap="round"/><path d="M10.40,161.76 C12.18,161.76 13.96,161.76 15.73,161.76 C17.51,161.76 19.29,138.49 21.07,134.91 C22.84,131.33 24.62,129.54 26.40,129.54 C28.18,129.54 29.95,167.13 31.73,167.13 C33.51,167.13 35.29,161.76 37.06,161.76 C38.84,161.76 40.62,165.34 42.40,167.13 C44.18,168.92 45.95,172.50 47.73,172.50 C49.51,172.50 51.29,161.76 53.06,161.76 C54.84,161.76 56.62,161.76 58.40,161.76 C60.17,161.76 61.95,167.13 63.73,167.13 C65.51,167.13 67.29,161.76 69.06,161.76 C70.84,161.76 72.62,161.76 74.40,161.76 C76.17,161.76 77.95,172.50 79.73,172.50 C81.51,172.50 83.28,167.13 85.06,167.13 C86.84,167.13 88.62,167.13 90.39,167.13 C92.17,167.13 93.95,172.50 95.73,172.50 C97.51,172.50 99.28,169.81 101.06,167.13 C102.84,164.44 104.62,156.39 106.39,156.39 C108.17,156.39 109.95,172.50 111.73,172.50 C113.50,172.50 115.28,161.76 117.06,161.76 C118.84,161.76 120.62,167.13 122.39,167.13 C124.17,167.13 125.95,162.66 127.73,156.39 C129.50,150.12 131.28,129.54 133.06,129.54 C134.84,129.54 136.61,143.86 138.39,151.02 C140.17,158.18 141.95,172.50 143.73,172.50 C145.50,172.50 147.28,167.13 149.06,167.13 C150.84,167.13 152.61,172.50 154.39,172.50 C156.17,172.50 157.95,172.50 159.72,172.50 C161.50,172.50 163.28,156.39 165.06,156.39 C166.83,156.39 168.61,167.13 170.39,167.13 C172.17,167.13 173.95,167.13 175.72,167.13 C177.50,167.13 179.28,167.13 181.06,167.13 C182.83,167.13 184.61,172.50 186.39,172.50 C188.17,172.50 189.94,156.39 191.72,156.39 C193.50,156.39 195.28,172.50 197.06,172.50 C198.83,172.50 200.61,145.65 202.39,145.65 C204.17,145.65 205.94,157.28 207.72,161.76 C209.50,166.23 211.28,172.50 213.05,172.50 C214.83,172.50 216.61,169.81 218.39,167.13 C220.16,164.44 221.94,156.39 223.72,156.39 C225.50,156.39 227.28,172.50 229.05,172.50 C230.83,172.50 232.61,172.50 234.39,172.50 C236.16,172.50 237.94,156.39 239.72,151.02 C241.50,145.65 243.27,140.28 245.05,140.28 C246.83,140.28 248.61,151.02 250.38,156.39 C252.16,161.76 253.94,172.50 255.72,172.50 C257.50,172.50 259.27,172.50 261.05,172.50 C262.83,172.50 264.61,167.13 266.38,167.13 C268.16,167.13 269.94,167.13 271.72,167.13 C273.49,167.13 275.27,167.13 277.05,167.13 C278.83,167.13 280.61,159.08 282.38,156.39 C284.16,153.71 285.94,151.02 287.72,151.02 C289.49,151.02 291.27,152.81 293.05,156.39 C294.83,159.97 296.60,172.50 298.38,172.50 C300.16,172.50 301.94,167.13 303.71,167.13 C305.49,167.13 307.27,172.50 309.05,172.50 C310.83,172.50 312.60,151.02 314.38,151.02 C316.16,151.02 317.94,161.76 319.71,161.76 C321.49,161.76 323.27,122.38 325.05,118.80 C326.82,115.22 328.60,113.43 330.38,113.43 C332.16,113.43 333.94,163.55 335.71,167.13 C337.49,170.71 339.27,172.50 341.05,172.50 C342.82,172.50 344.60,161.76 346.38,161.76 C348.16,161.76 349.93,161.76 351.71,161.76 C353.49,161.76 355.27,167.13 357.05,167.13 C358.82,167.13 360.60,156.39 362.38,156.39 C364.16,156.39 365.93,167.13 367.71,167.13 C369.49,167.13 371.27,167.13 373.04,167.13 C374.82,167.13 376.60,172.50 378.38,172.50 C380.15,172.50 381.93,161.76 383.71,161.76 C385.49,161.76 387.27,161.76 389.04,161.76 C390.82,161.76 392.60,161.76 394.38,161.76 C396.15,161.76 397.93,156.39 399.71,156.39 C401.49,156.39 403.26,156.39 405.04,156.39 C406.82,156.39 408.60,159.97 410.38,161.76 C412.15,163.55 413.93,167.13 415.71,167.13 C417.49,167.13 419.26,163.55 421.04,161.76 C422.82,159.97 424.60,158.18 426.37,156.39 C428.15,154.60 429.93,154.60 431.71,151.02 C433.48,147.44 435.26,91.95 437.04,91.95 C438.82,91.95 440.60,113.43 442.37,124.17 C444.15,134.91 445.93,156.39 447.71,156.39 C449.48,156.39 451.26,124.17 453.04,124.17 C454.82,124.17 456.59,145.65 458.37,145.65 C460.15,145.65 461.93,143.86 463.70,140.28 C465.48,136.70 467.26,124.17 469.04,118.80 C470.82,113.43 472.59,108.06 474.37,108.06 C476.15,108.06 477.93,115.22 479.70,124.17 C481.48,133.12 483.26,149.23 485.04,161.76" fill="none" stroke="#4a9bc4" stroke-width="1.75" stroke-linejoin="round" stroke-linecap="round"/></svg>
<div class="r" style="left:936.00px;top:784.10px;width:11.40px;height:2.00px;background:#4a9bc4;border-radius:1px;"></div>
<div class="t" style="left:954.40px;top:781px;font-size:10px;line-height:10px;color:#616161;">Sep 16–Dec 14, 2024</div>
<svg class="r" style="left:1066.40px;top:782.90px;" width="13" height="3" viewBox="0 0 13 3"><path d="M1 1.2 L12 1.2" stroke="#7d9bb0" stroke-width="1.5" stroke-dasharray="0.1 3.2" stroke-linecap="round"/></svg>
<div class="t" style="left:1083.90px;top:781px;font-size:10px;line-height:10px;color:#616161;">Jun 18–Sep 15, 2024</div>
<div class="t" style="left:1361.90px;top:508px;font-size:12.75px;line-height:12.75px;color:#303030;-webkit-text-stroke:0.6px #303030;">Average order value</div>
<div class="r" style="left:1361.90px;top:521.00px;width:113.80px;height:1.00px;border-top:1px dotted #c4c4c4;"></div>
<div class="t" style="left:1361.90px;top:532px;font-size:19px;line-height:19px;color:#303030;font-weight:700;letter-spacing:0.5px;">$324.35</div>
<svg class="r" style="left:1440.40px;top:539.40px;" width="6" height="6" viewBox="0 0 6 6"><path d="M0.9 5.1 L3.8 2.2" stroke="#0e7c4f" stroke-width="1.6" stroke-linecap="round"/><path d="M1.4 0.6 L5.4 0.6 L5.4 4.6 Z" fill="#0e7c4f"/></svg>
<div class="t" style="left:1448.00px;top:537px;font-size:11px;line-height:11px;color:#137a52;font-weight:700;-webkit-text-stroke:0.3px #137a52;">25%</div>
<div class="r" style="left:1400.90px;top:570.70px;width:467.50px;height:1.00px;background:#efefef;"></div>
<div class="t" style="left:1363.00px;top:567px;font-size:10px;line-height:10px;color:#616161;">$3K</div>
<div class="r" style="left:1400.90px;top:624.50px;width:467.50px;height:1.00px;background:#efefef;"></div>
<div class="t" style="left:1363.00px;top:621px;font-size:10px;line-height:10px;color:#616161;">$2K</div>
<div class="r" style="left:1400.90px;top:678.30px;width:467.50px;height:1.00px;background:#efefef;"></div>
<div class="t" style="left:1363.00px;top:674px;font-size:10px;line-height:10px;color:#616161;">$1K</div>
<div class="r" style="left:1400.90px;top:732.00px;width:467.50px;height:1.00px;background:#efefef;"></div>
<div class="t" style="left:1363.00px;top:728px;font-size:10px;line-height:10px;color:#616161;">$0</div>
<div class="t" style="left:1201.20px;width:400px;text-align:center;top:746px;font-size:10.3px;line-height:10.3px;color:#616161;letter-spacing:-0.3px;">Sep 16</div>
<div class="t" style="left:1253.75px;width:400px;text-align:center;top:746px;font-size:10.3px;line-height:10.3px;color:#616161;letter-spacing:-0.3px;">Sep 26</div>
<div class="t" style="left:1306.30px;width:400px;text-align:center;top:746px;font-size:10.3px;line-height:10.3px;color:#616161;letter-spacing:-0.3px;">Oct 6</div>
<div class="t" style="left:1358.85px;width:400px;text-align:center;top:746px;font-size:10.3px;line-height:10.3px;color:#616161;letter-spacing:-0.3px;">Oct 16</div>
<div class="t" style="left:1411.40px;width:400px;text-align:center;top:746px;font-size:10.3px;line-height:10.3px;color:#616161;letter-spacing:-0.3px;">Oct 26</div>
<div class="t" style="left:1463.95px;width:400px;text-align:center;top:746px;font-size:10.3px;line-height:10.3px;color:#616161;letter-spacing:-0.3px;">Nov 5</div>
<div class="t" style="left:1516.50px;width:400px;text-align:center;top:746px;font-size:10.3px;line-height:10.3px;color:#616161;letter-spacing:-0.3px;">Nov 15</div>
<div class="t" style="left:1569.05px;width:400px;text-align:center;top:746px;font-size:10.3px;line-height:10.3px;color:#616161;letter-spacing:-0.3px;">Nov 25</div>
<div class="t" style="left:1621.60px;width:400px;text-align:center;top:746px;font-size:10.3px;line-height:10.3px;color:#616161;letter-spacing:-0.3px;">Dec 5</div>
<svg class="r" style="left:1390.00px;top:560.00px;" width="490" height="185" viewBox="0 0 490 185"><path d="M11.00,172.50 C12.75,167.31 14.50,156.93 16.25,156.93 C18.00,156.93 19.75,167.13 21.50,167.13 C23.25,167.13 25.00,132.76 26.75,132.76 C28.50,132.76 30.25,151.91 32.00,158.54 C33.75,165.16 35.50,172.50 37.25,172.50 C39.00,172.50 40.75,116.65 42.50,116.65 C44.25,116.65 46.00,164.45 47.75,167.67 C49.50,170.89 51.25,172.50 53.00,172.50 C54.75,172.50 56.50,149.95 58.25,149.95 C60.00,149.95 61.75,165.70 63.50,167.13 C65.25,168.56 67.00,169.28 68.75,169.28 C70.50,169.28 72.25,157.02 74.00,153.17 C75.75,149.32 77.50,146.19 79.25,146.19 C81.00,146.19 82.75,163.91 84.50,163.91 C86.25,163.91 88.00,163.19 89.75,161.76 C91.50,160.33 93.25,146.19 95.00,146.19 C96.75,146.19 98.50,153.17 100.25,153.17 C102.00,153.17 103.75,116.65 105.50,116.65 C107.25,116.65 109.00,152.45 110.75,158.54 C112.50,164.62 114.25,165.34 116.00,167.67 C117.75,169.99 119.50,172.50 121.25,172.50 C123.00,172.50 124.75,146.19 126.50,146.19 C128.25,146.19 130.00,163.91 131.75,163.91 C133.50,163.91 135.25,162.03 137.00,160.69 C138.75,159.34 140.50,156.21 142.25,155.85 C144.00,155.50 145.75,155.67 147.50,155.32 C149.25,154.96 151.00,152.63 152.75,152.63 C154.50,152.63 156.25,172.50 158.00,172.50 C159.75,172.50 161.50,170.89 163.25,167.67 C165.00,164.45 166.75,162.83 168.50,153.17 C170.25,143.50 172.00,83.36 173.75,83.36 C175.50,83.36 177.25,149.23 179.00,158.54 C180.75,167.85 182.50,172.50 184.25,172.50 C186.00,172.50 187.75,172.50 189.50,172.50 C191.25,172.50 193.00,172.50 194.75,172.50 C196.50,172.50 198.25,148.87 200.00,148.87 C201.75,148.87 203.50,150.30 205.25,153.17 C207.00,156.03 208.75,172.50 210.50,172.50 C212.25,172.50 214.00,151.56 215.75,151.56 C217.50,151.56 219.25,167.67 221.00,167.67 C222.75,167.67 224.50,122.02 226.25,122.02 C228.00,122.02 229.75,164.45 231.50,167.67 C233.25,170.89 235.00,172.50 236.75,172.50 C238.50,172.50 240.25,162.83 242.00,159.61 C243.75,156.39 245.50,153.17 247.25,153.17 C249.00,153.17 250.75,153.88 252.50,155.32 C254.25,156.75 256.00,172.50 257.75,172.50 C259.50,172.50 261.25,167.40 263.00,158.54 C264.75,149.68 266.50,119.34 268.25,119.34 C270.00,119.34 271.75,158.54 273.50,158.54 C275.25,158.54 277.00,152.00 278.75,149.95 C280.50,147.89 282.25,147.26 284.00,146.19 C285.75,145.11 287.50,143.50 289.25,143.50 C291.00,143.50 292.75,164.45 294.50,167.67 C296.25,170.89 298.00,172.50 299.75,172.50 C301.50,172.50 303.25,172.50 305.00,172.50 C306.75,172.50 308.50,167.67 310.25,167.67 C312.00,167.67 313.75,167.67 315.50,167.67 C317.25,167.67 319.00,137.06 320.75,137.06 C322.50,137.06 324.25,147.26 326.00,153.17 C327.75,159.08 329.50,172.50 331.25,172.50 C333.00,172.50 334.75,172.50 336.50,172.50 C338.25,172.50 340.00,167.67 341.75,167.67 C343.50,167.67 345.25,167.67 347.00,167.67 C348.75,167.67 350.50,163.37 352.25,160.69 C354.00,158.00 355.75,151.56 357.50,151.56 C359.25,151.56 361.00,155.05 362.75,158.54 C364.50,162.03 366.25,172.50 368.00,172.50 C369.75,172.50 371.50,172.50 373.25,172.50 C375.00,172.50 376.75,170.53 378.50,167.67 C380.25,164.80 382.00,160.42 383.75,155.32 C385.50,150.21 387.25,137.06 389.00,137.06 C390.75,137.06 392.50,142.43 394.25,142.43 C396.00,142.43 397.75,131.69 399.50,131.69 C401.25,131.69 403.00,151.56 404.75,151.56 C406.50,151.56 408.25,148.87 410.00,148.87 C411.75,148.87 413.50,170.35 415.25,170.35 C417.00,170.35 418.75,168.74 420.50,167.67 C422.25,166.59 424.00,163.91 425.75,163.91 C427.50,163.91 429.25,163.91 431.00,163.91 C432.75,163.91 434.50,160.69 436.25,160.69 C438.00,160.69 439.75,172.50 441.50,172.50 C443.25,172.50 445.00,172.50 446.75,172.50 C448.50,172.50 450.25,172.50 452.00,172.50 C453.75,172.50 455.50,172.50 457.25,172.50 C459.00,172.50 460.75,170.17 462.50,168.74 C464.25,167.31 466.00,165.61 467.75,163.91 C469.50,162.21 471.25,158.54 473.00,158.54 C474.75,158.54 476.50,167.13 478.25,171.43" fill="none" stroke="#7d9bb0" stroke-width="1.6" stroke-dasharray="0.1 3.5" stroke-linecap="round"/><path d="M11.00,128.47 C12.75,140.10 14.50,159.43 16.25,163.37 C18.00,167.31 19.75,169.28 21.50,169.28 C23.25,169.28 25.00,167.13 26.75,167.13 C28.50,167.13 30.25,172.50 32.00,172.50 C33.75,172.50 35.50,156.93 37.25,156.93 C39.00,156.93 40.75,164.53 42.50,167.13 C44.25,169.73 46.00,172.50 47.75,172.50 C49.50,172.50 51.25,138.13 53.00,138.13 C54.75,138.13 56.50,172.50 58.25,172.50 C60.00,172.50 61.75,164.98 63.50,164.98 C65.25,164.98 67.00,164.98 68.75,164.98 C70.50,164.98 72.25,165.16 74.00,165.52 C75.75,165.88 77.50,172.50 79.25,172.50 C81.00,172.50 82.75,138.13 84.50,138.13 C86.25,138.13 88.00,146.90 89.75,152.63 C91.50,158.36 93.25,172.50 95.00,172.50 C96.75,172.50 98.50,172.50 100.25,172.50 C102.00,172.50 103.75,169.28 105.50,169.28 C107.25,169.28 109.00,172.50 110.75,172.50 C112.50,172.50 114.25,163.91 116.00,163.91 C117.75,163.91 119.50,172.50 121.25,172.50 C123.00,172.50 124.75,172.50 126.50,172.50 C128.25,172.50 130.00,172.50 131.75,172.50 C133.50,172.50 135.25,172.50 137.00,172.50 C138.75,172.50 140.50,172.50 142.25,172.50 C144.00,172.50 145.75,160.15 147.50,160.15 C149.25,160.15 151.00,172.50 152.75,172.50 C154.50,172.50 156.25,172.50 158.00,172.50 C159.75,172.50 161.50,172.50 163.25,172.50 C165.00,172.50 166.75,144.58 168.50,144.58 C170.25,144.58 172.00,172.50 173.75,172.50 C175.50,172.50 177.25,172.50 179.00,172.50 C180.75,172.50 182.50,172.50 184.25,172.50 C186.00,172.50 187.75,167.67 189.50,167.67 C191.25,167.67 193.00,172.50 194.75,172.50 C196.50,172.50 198.25,172.50 200.00,172.50 C201.75,172.50 203.50,163.91 205.25,163.91 C207.00,163.91 208.75,172.50 210.50,172.50 C212.25,172.50 214.00,166.06 215.75,153.17 C217.50,140.28 219.25,47.92 221.00,47.92 C222.75,47.92 224.50,172.50 226.25,172.50 C228.00,172.50 229.75,172.50 231.50,172.50 C233.25,172.50 235.00,163.55 236.75,156.93 C238.50,150.30 240.25,132.76 242.00,132.76 C243.75,132.76 245.50,166.23 247.25,168.74 C249.00,171.25 250.75,172.50 252.50,172.50 C254.25,172.50 256.00,172.50 257.75,172.50 C259.50,172.50 261.25,166.06 263.00,153.17 C264.75,140.28 266.50,33.42 268.25,33.42 C270.00,33.42 271.75,172.50 273.50,172.50 C275.25,172.50 277.00,168.29 278.75,162.30 C280.50,156.30 282.25,136.52 284.00,136.52 C285.75,136.52 287.50,157.37 289.25,163.37 C291.00,169.37 292.75,172.50 294.50,172.50 C296.25,172.50 298.00,110.21 299.75,110.21 C301.50,110.21 303.25,172.50 305.00,172.50 C306.75,172.50 308.50,171.25 310.25,168.74 C312.00,166.23 313.75,120.41 315.50,120.41 C317.25,120.41 319.00,154.24 320.75,154.24 C322.50,154.24 324.25,153.88 326.00,153.17 C327.75,152.45 329.50,113.97 331.25,113.97 C333.00,113.97 334.75,172.50 336.50,172.50 C338.25,172.50 340.00,172.50 341.75,172.50 C343.50,172.50 345.25,38.79 347.00,38.79 C348.75,38.79 350.50,172.50 352.25,172.50 C354.00,172.50 355.75,158.00 357.50,158.00 C359.25,158.00 361.00,169.28 362.75,169.28 C364.50,169.28 366.25,87.12 368.00,87.12 C369.75,87.12 371.50,172.50 373.25,172.50 C375.00,172.50 376.75,172.50 378.50,172.50 C380.25,172.50 382.00,55.97 383.75,55.97 C385.50,55.97 387.25,158.54 389.00,158.54 C390.75,158.54 392.50,109.67 394.25,109.67 C396.00,109.67 397.75,164.27 399.50,166.06 C401.25,167.85 403.00,168.03 404.75,168.74 C406.50,169.46 408.25,170.35 410.00,170.35 C411.75,170.35 413.50,155.50 415.25,149.95 C417.00,144.40 418.75,137.06 420.50,137.06 C422.25,137.06 424.00,167.67 425.75,167.67 C427.50,167.67 429.25,167.67 431.00,167.67 C432.75,167.67 434.50,131.15 436.25,131.15 C438.00,131.15 439.75,160.51 441.50,161.22 C443.25,161.94 445.00,161.85 446.75,162.30 C448.50,162.74 450.25,163.91 452.00,163.91 C453.75,163.91 455.50,158.54 457.25,158.54 C459.00,158.54 460.75,158.72 462.50,159.08 C464.25,159.43 466.00,164.45 467.75,164.45 C469.50,164.45 471.25,163.37 473.00,161.22 C474.75,159.07 476.50,138.67 478.25,127.39" fill="none" stroke="#4a9bc4" stroke-width="1.75" stroke-linejoin="round" stroke-linecap="round"/></svg>
<div class="r" style="left:1490.50px;top:784.10px;width:11.40px;height:2.00px;background:#4a9bc4;border-radius:1px;"></div>
<div class="t" style="left:1508.90px;top:781px;font-size:10px;line-height:10px;color:#616161;">Sep 16–Dec 14, 2024</div>
<svg class="r" style="left:1620.90px;top:782.90px;" width="13" height="3" viewBox="0 0 13 3"><path d="M1 1.2 L12 1.2" stroke="#7d9bb0" stroke-width="1.5" stroke-dasharray="0.1 3.2" stroke-linecap="round"/></svg>
<div class="t" style="left:1638.40px;top:781px;font-size:10px;line-height:10px;color:#616161;">Jun 18–Sep 15, 2024</div>
<div class="t" style="left:252.30px;top:841px;font-size:12.75px;line-height:12.75px;color:#303030;-webkit-text-stroke:0.6px #303030;">Top selling products</div>
<div class="r" style="left:252.30px;top:854.40px;width:114.90px;height:1.00px;border-top:1px dotted #c4c4c4;"></div>
<div class="t" style="left:252.30px;top:875px;font-size:10.9px;line-height:10.9px;color:#616161;">Gift Wrapping</div>
<div class="r" style="left:252.30px;top:889.20px;width:279.20px;height:9.50px;background:linear-gradient(90deg,#3597d4,#4fb1e9);border-radius:0 3px 3px 0;"></div>
<div class="t" style="left:540.40px;top:889px;font-size:10.5px;line-height:10.5px;color:#616161;">22</div>
<svg class="r" style="left:561.40px;top:891.60px;" width="6" height="6" viewBox="0 0 6 6"><path d="M0.9 5.1 L3.8 2.2" stroke="#0e7c4f" stroke-width="1.6" stroke-linecap="round"/><path d="M1.4 0.6 L5.4 0.6 L5.4 4.6 Z" fill="#0e7c4f"/></svg>
<div class="t" style="left:569.50px;top:889px;font-size:10.5px;line-height:10.5px;color:#137a52;font-weight:700;-webkit-text-stroke:0.3px #137a52;">16%</div>
<div class="r" style="left:252.30px;top:901.00px;width:241.10px;height:9.60px;background:#96c9e9;border-radius:0 3px 3px 0;"></div>
<div class="t" style="left:502.60px;top:900px;font-size:10.5px;line-height:10.5px;color:#616161;">19</div>
<div class="t" style="left:252.30px;top:929px;font-size:10.5px;line-height:10.5px;color:#616161;">Vincent Peach Holiday Bazaar - VIP Ticket</div>
<div class="r" style="left:252.30px;top:942.60px;width:139.00px;height:2.00px;background:#3a9ad6;"></div>
<div class="t" style="left:807.20px;top:841px;font-size:12.75px;line-height:12.75px;color:#303030;-webkit-text-stroke:0.6px #303030;">Customer cohort analysis</div>
<div class="r" style="left:807.20px;top:854.20px;width:145.30px;height:1.00px;border-top:1px dotted #c4c4c4;"></div>
<div class="t" style="left:627.80px;width:400px;text-align:center;top:876px;font-size:10.5px;line-height:10.5px;color:#616161;">0</div>
<div class="t" style="left:670.43px;width:400px;text-align:center;top:876px;font-size:10.5px;line-height:10.5px;color:#616161;">1</div>
<div class="t" style="left:713.06px;width:400px;text-align:center;top:876px;font-size:10.5px;line-height:10.5px;color:#616161;">2</div>
<div class="t" style="left:755.69px;width:400px;text-align:center;top:876px;font-size:10.5px;line-height:10.5px;color:#616161;">3</div>
<div class="t" style="left:798.32px;width:400px;text-align:center;top:876px;font-size:10.5px;line-height:10.5px;color:#616161;">4</div>
<div class="t" style="left:840.95px;width:400px;text-align:center;top:876px;font-size:10.5px;line-height:10.5px;color:#616161;">5</div>
<div class="t" style="left:883.58px;width:400px;text-align:center;top:876px;font-size:10.5px;line-height:10.5px;color:#616161;">6</div>
<div class="t" style="left:926.21px;width:400px;text-align:center;top:876px;font-size:10.5px;line-height:10.5px;color:#616161;">7</div>
<div class="t" style="left:968.84px;width:400px;text-align:center;top:876px;font-size:10.5px;line-height:10.5px;color:#616161;">8</div>
<div class="t" style="left:1011.47px;width:400px;text-align:center;top:876px;font-size:10.5px;line-height:10.5px;color:#616161;">9</div>
<div class="t" style="left:1054.10px;width:400px;text-align:center;top:876px;font-size:10.5px;line-height:10.5px;color:#616161;">10</div>
<div class="t" style="left:1096.73px;width:400px;text-align:center;top:876px;font-size:10.5px;line-height:10.5px;color:#616161;">11</div>
<div class="r" style="left:807.20px;top:893.00px;width:42.70px;height:16.70px;background:#3a2db0;"></div>
<div class="r" style="left:849.83px;top:893.00px;width:42.70px;height:16.70px;background:#e6e8f9;"></div>
<div class="r" style="left:892.46px;top:893.00px;width:42.70px;height:16.70px;background:#f7f8fd;"></div>
<div class="r" style="left:935.09px;top:893.00px;width:42.70px;height:16.70px;background:#e6e8f9;"></div>
<div class="r" style="left:977.72px;top:893.00px;width:42.70px;height:16.70px;background:#f2f3fc;"></div>
<div class="r" style="left:1020.35px;top:893.00px;width:42.70px;height:16.70px;background:#e6e8f9;"></div>
<div class="r" style="left:1062.98px;top:893.00px;width:42.70px;height:16.70px;background:#cbd2f3;"></div>
<div class="r" style="left:1105.61px;top:893.00px;width:42.70px;height:16.70px;background:#b1bdf1;"></div>
<div class="r" style="left:1148.24px;top:893.00px;width:42.70px;height:16.70px;background:#cbd2f3;"></div>
<div class="r" style="left:1190.87px;top:893.00px;width:42.70px;height:16.70px;background:#b1bdf1;"></div>
<div class="r" style="left:1233.50px;top:893.00px;width:42.70px;height:16.70px;background:#f7f8fd;"></div>
<div class="r" style="left:1276.13px;top:893.00px;width:42.70px;height:16.70px;background:#e6e8f9;"></div>
<div class="r" style="left:807.20px;top:909.63px;width:42.70px;height:16.70px;background:#f7f8fd;"></div>
<div class="r" style="left:849.83px;top:909.63px;width:42.70px;height:16.70px;background:#cbd2f3;"></div>
<div class="r" style="left:892.46px;top:909.63px;width:42.70px;height:16.70px;background:#cbd2f3;"></div>
<div class="r" style="left:935.09px;top:909.63px;width:42.70px;height:16.70px;background:#f7f8fd;"></div>
<div class="r" style="left:977.72px;top:909.63px;width:42.70px;height:16.70px;background:#f7f8fd;"></div>
<div class="r" style="left:1020.35px;top:909.63px;width:42.70px;height:16.70px;background:#f7f8fd;"></div>
<div class="r" style="left:1062.98px;top:909.63px;width:42.70px;height:16.70px;background:#cbd2f3;"></div>
<div class="r" style="left:1105.61px;top:909.63px;width:42.70px;height:16.70px;background:#f7f8fd;"></div>
<div class="r" style="left:1148.24px;top:909.63px;width:42.70px;height:16.70px;background:#f7f8fd;"></div>
<div class="r" style="left:1190.87px;top:909.63px;width:42.70px;height:16.70px;background:#f7f8fd;"></div>
<div class="r" style="left:1233.50px;top:909.63px;width:42.70px;height:16.70px;background:#f7f8fd;"></div>
<div class="r" style="left:1276.13px;top:909.63px;width:42.70px;height:16.70px;background:#ffffff;"></div>
<div class="r" style="left:807.20px;top:926.26px;width:42.70px;height:16.70px;background:#98a4ee;"></div>
<div class="r" style="left:849.83px;top:926.26px;width:42.70px;height:16.70px;background:#98a4ee;"></div>
<div class="r" style="left:892.46px;top:926.26px;width:42.70px;height:16.70px;background:#98a4ee;"></div>
<div class="r" style="left:935.09px;top:926.26px;width:42.70px;height:16.70px;background:#3a2db0;"></div>
<div class="r" style="left:977.72px;top:926.26px;width:42.70px;height:16.70px;background:#e6e8f9;"></div>
<div class="r" style="left:1020.35px;top:926.26px;width:42.70px;height:16.70px;background:#98a4ee;"></div>
<div class="r" style="left:1062.98px;top:926.26px;width:42.70px;height:16.70px;background:#e6e8f9;"></div>
<div class="r" style="left:1105.61px;top:926.26px;width:42.70px;height:16.70px;background:#e6e8f9;"></div>
<div class="r" style="left:1148.24px;top:926.26px;width:42.70px;height:16.70px;background:#e6e8f9;"></div>
<div class="r" style="left:1190.87px;top:926.26px;width:42.70px;height:16.70px;background:#f7f8fd;"></div>
<div class="r" style="left:1233.50px;top:926.26px;width:42.70px;height:16.70px;background:#ffffff;"></div>
<div class="r" style="left:1276.13px;top:926.26px;width:42.70px;height:16.70px;background:#ffffff;"></div>
<div class="t" style="left:1361.70px;top:841px;font-size:12.75px;line-height:12.75px;color:#303030;-webkit-text-stroke:0.6px #303030;">Returning customer rate</div>
<div class="r" style="left:1361.70px;top:854.20px;width:137.30px;height:1.00px;border-top:1px dotted #c4c4c4;"></div>
<div class="t" style="left:1361.70px;top:864px;font-size:19.4px;line-height:19.4px;color:#303030;font-weight:700;letter-spacing:0.4px;">52.84%</div>
<svg class="r" style="left:1436.40px;top:872.40px;" width="6" height="6" viewBox="0 0 6 6"><path d="M0.9 0.9 L3.8 3.8" stroke="#4a4a4a" stroke-width="1.6" stroke-linecap="round"/><path d="M1.4 5.4 L5.4 5.4 L5.4 1.4 Z" fill="#4a4a4a"/></svg>
<div class="t" style="left:1444.50px;top:870px;font-size:9.8px;line-height:9.8px;color:#555555;font-weight:700;-webkit-text-stroke:0.3px #555555;">12%</div>
<div class="r" style="left:1394.30px;top:904.00px;width:475.30px;height:1.00px;background:#efefef;"></div>
<div class="t" style="left:1363.00px;top:899px;font-size:10px;line-height:10px;color:#616161;">15</div>
<svg class="r" style="left:1850.00px;top:930.00px;" width="16" height="15" viewBox="0 0 16 15"><path d="M5.4 14.5 C6.6 9.5 7 6.4 8.1 6.4 C9.2 6.4 9.6 9.5 10.8 14.5" fill="#cfe8f5" stroke="#4a9bc4" stroke-width="1.7"/></svg>
<div class="r" style="left:1554.20px;top:842.60px;width:207.60px;height:87.50px;background:#f9f9f9;border-radius:8px;box-shadow:0 0 0 1px rgba(0,0,0,0.06), 0 4px 10px rgba(0,0,0,0.12);"></div>
<div class="r" style="left:1679.70px;top:847.60px;width:36.60px;height:38.60px;background:#fdfdfd;border-radius:3px;box-shadow:0 0 0 1px rgba(0,0,0,0.035), 0 1px 1px rgba(0,0,0,0.04);"></div>
<svg class="r" style="left:1568.00px;top:857.00px;" width="22" height="22" viewBox="0 0 22 22"><path d="M3.5 4 C6 0.8 13 0.6 16.5 3.6 C19.6 6.5 18.8 14 15.5 16.8 C12.2 19 6 18.8 3.6 15.8 C1 12.6 1.2 7 3.5 4 Z" fill="#5aab2c"/><path d="M6.3 9.6 L8.8 12 L13.2 7.4" fill="none" stroke="#d9f5c0" stroke-width="1.7"/><circle cx="14.5" cy="14.3" r="3.6" fill="#f4f4e0"/><circle cx="14.5" cy="14.3" r="2.6" fill="#d8202a"/></svg>
<svg class="r" style="left:1608.00px;top:858.00px;" width="20" height="18" viewBox="0 0 20 18"><path d="M1.8 4 L6.4 4 L8.6 9 L7 15.4 Z" fill="#505560"/><path d="M6.4 4 L11.6 4 L7 15.4 L8.6 9 Z" fill="#8a8f98"/><circle cx="13.7" cy="5" r="4.4" fill="#d0304e"/><path d="M12.1 3.4 L15.3 6.6 M15.3 3.4 L12.1 6.6 M13.7 2.8 L13.7 7.2" stroke="#fff" stroke-width="1"/></svg>
<svg class="r" style="left:1650.00px;top:860.00px;" width="16" height="16" viewBox="0 0 16 16"><g fill="#f9f9f9" stroke="#6e6e6e" stroke-width="1.05"><rect x="0.6" y="3.5" width="14.2" height="3.6" rx="1.8"/><rect x="3.7" y="0.6" width="3.6" height="14.2" rx="1.8"/><rect x="0.6" y="7.8" width="14.2" height="3.6" rx="1.8"/><rect x="7.9" y="0.6" width="3.6" height="14.2" rx="1.8"/><path d="M0.6 9.6 A1.8 1.8 0 0 1 2.4 7.8 L6.8 7.8" fill="none"/></g></svg>
<svg class="r" style="left:1689.00px;top:857.00px;" width="18" height="20" viewBox="0 0 18 20"><path d="M2.2 17.4 C3.5 12 8 5.5 15.6 1.8 C15.6 7 12 12.6 3.8 16 Z" fill="#8f58c9"/><path d="M5 15 C8 12.6 11.5 9.6 13.4 6.4 C12.6 10 9.6 13 5 15 Z" fill="#c9a4f0"/></svg>
<svg class="r" style="left:1730.00px;top:857.00px;" width="16" height="19" viewBox="0 0 16 19"><path d="M2 5.6 C2 1.5 14 1.5 14 5.6 L12.4 5.6 L12.4 16.4 C12.4 18 3.6 18 3.6 16.4 L3.6 5.6 Z" fill="#262626"/><path d="M4.5 4.6 C6 3 10 3 11.5 4.6" fill="none" stroke="#8a8a8a" stroke-width="0.8"/><path d="M5.6 8 L5.6 15 M10.4 8 L10.4 15 M5.6 11.3 L10.4 11.3" stroke="#9a9a9a" stroke-width="1.1"/></svg>
<svg class="r" style="left:1569.00px;top:898.00px;" width="20" height="18" viewBox="0 0 20 18"><path d="M2 2.6 C4.5 1.4 6.5 0.8 8.9 0.8 C11.3 0.8 13.5 1.4 16 2.6 L16 8 C16 12 13 15 8.9 16.2 C5 15 2 12 2 8 Z" fill="#1f7fd0"/><path d="M2 2.6 C4.5 1.4 6.5 0.8 8.9 0.8 L8.9 8.4 L2 8 Z" fill="#3fb0f0"/><path d="M12.4 6.4 L18 16.8 L6.8 16.8 Z" fill="#f5c026" stroke="#fdfdfd" stroke-width="0.9" stroke-linejoin="round"/><path d="M12.4 9.6 L12.4 13.4" stroke="#1a1a1a" stroke-width="1.3"/><circle cx="12.4" cy="15.1" r="0.7" fill="#1a1a1a"/></svg>
<div class="r" style="left:0.00px;top:943.30px;width:1919.00px;height:1.00px;background:#ffffff;"></div>
<div class="r" style="left:0.00px;top:944.20px;width:1919.00px;height:1.20px;background:#b4bcc7;"></div>
<div class="r" style="left:0.00px;top:945.30px;width:1919.00px;height:3.70px;background:#dfe4ea;"></div>
<div class="r" style="left:1056.00px;top:947.50px;width:33.00px;height:1.50px;background:#dba9a9;"></div>
</body></html>
